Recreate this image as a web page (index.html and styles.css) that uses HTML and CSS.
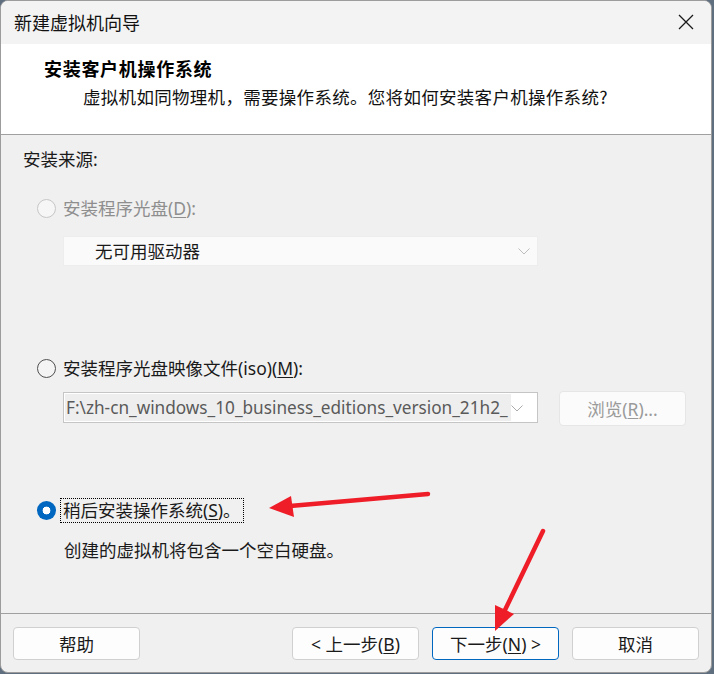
FILE: index.html
```html
<!DOCTYPE html>
<html lang="zh-CN">
<head>
<meta charset="utf-8">
<title>新建虚拟机向导</title>
<link rel="stylesheet" href="styles.css">
</head>
<body>
<div class="window">
  <div class="titlebar">
    <span class="title">新建虚拟机向导</span>
    <svg class="close" width="16" height="16" viewBox="0 0 16 16"><path d="M1 1 L15 15 M15 1 L1 15" stroke="#1a1a1a" stroke-width="1.3" fill="none"/></svg>
  </div>
  <div class="header">
    <div class="h-title">安装客户机操作系统</div>
    <div class="h-sub">虚拟机如同物理机，需要操作系统。您将如何安装客户机操作系统?</div>
  </div>
  <div class="main">
    <div class="src-label">安装来源:</div>

    <div class="radio-row r1 disabled">
      <span class="radio"></span>
      <span class="rlabel">安装程序光盘(<u>D</u>):</span>
    </div>
    <div class="select disabled-select">
      <span class="sel-text">无可用驱动器</span>
      <svg class="chev" width="12" height="7" viewBox="0 0 12 7"><polyline points="0.5,0.5 6,6 11.5,0.5" fill="none" stroke="#bdbdbd" stroke-width="1"/></svg>
    </div>

    <div class="radio-row r2">
      <span class="radio"></span>
      <span class="rlabel">安装程序光盘映像文件(iso)(<u>M</u>):</span>
    </div>
    <div class="iso-row">
      <div class="select combo">
        <span class="combo-text">F:\zh-cn_windows_10_business_editions_version_21h2_</span>
        <svg class="chev" width="12" height="7" viewBox="0 0 12 7"><polyline points="0.5,0.5 6,6 11.5,0.5" fill="none" stroke="#ababab" stroke-width="1"/></svg>
      </div>
      <div class="browse">浏览(<u>R</u>)...</div>
    </div>

    <div class="radio-row r3">
      <span class="radio checked"></span>
      <span class="rlabel focus">稍后安装操作系统(<u>S</u>)。</span>
    </div>
    <div class="desc">创建的虚拟机将包含一个空白硬盘。</div>
  </div>
  <div class="footer">
    <div class="btn">帮助</div>
    <div class="spacer"></div>
    <div class="btn">&lt; 上一步(<u>B</u>)</div>
    <div class="btn primary">下一步(<u>N</u>) &gt;</div>
    <div class="btn">取消</div>
  </div>
</div>
<svg class="arrows" width="714" height="674" viewBox="0 0 714 674">
  <g stroke="#ee1d27" stroke-width="4.5" stroke-linecap="round" fill="none">
    <line x1="428" y1="494" x2="290" y2="506"/>
    <line x1="543" y1="531" x2="505" y2="610"/>
  </g>
  <g fill="#ee1d27">
    <polygon points="269,508 294,517 291,496"/>
    <polygon points="495,631 514,614 495,605"/>
  </g>
</svg>
</body>
</html>
```

FILE: styles.css
```css
html, body {
  margin: 0;
  padding: 0;
  width: 714px;
  height: 674px;
  background: #5f6f80;
  overflow: hidden;
}
body {
  position: relative;
  font-family: "Noto Sans", "Noto Sans CJK SC", sans-serif;
  color: #1a1a1a;
}
.window {
  width: 712px;
  height: 673px;
  box-sizing: border-box;
  border: 1px solid #9c9c9c;
  border-radius: 8px;
  overflow: hidden;
  background: #f0f0f0;
  display: flex;
  flex-direction: column;
}
.titlebar {
  height: 43px;
  flex: none;
  background: #f3f3f3;
  display: flex;
  align-items: center;
  padding: 0 0 0 13px;
}
.title {
  font-family: "Noto Sans CJK SC", sans-serif;
  font-size: 18px;
  line-height: 24px;
  color: #111;
  flex: 1;
  margin-top: -1px;
}
.close {
  margin-right: 17px;
  margin-top: -1px;
}
.header {
  height: 90px;
  flex: none;
  background: #ffffff;
  border-bottom: 1px solid #a0a0a0;
  box-sizing: content-box;
}
.h-title {
  font-family: "Noto Sans CJK SC", sans-serif;
  font-weight: 700;
  font-size: 18px;
  letter-spacing: 0.7px;
  line-height: 24px;
  color: #000;
  margin: 12px 0 0 43px;
}
.h-sub {
  font-family: "Noto Sans CJK SC", sans-serif;
  font-size: 17.5px;
  line-height: 24px;
  color: #111;
  margin: 5px 0 0 82px;
  letter-spacing: 0.3px;
}
.main {
  flex: 1;
  padding: 12px 0 0 22px;
  font-size: 17.5px;
  line-height: 24px;
}
.src-label {
  height: 24px;
  color: #1a1a1a;
}
.radio-row {
  display: flex;
  align-items: center;
  height: 24px;
  padding-left: 14px;
  gap: 7px;
}
.r1 { margin-top: 25px; }
.r2 { margin-top: 90px; }
.r3 { margin-top: 72px; }
.radio {
  width: 17px;
  height: 17px;
  border-radius: 50%;
  border: 1px solid #4f4f4f;
  background: #f4f4f4;
  flex: none;
}
.disabled .radio {
  border-color: #c6c6c6;
  background: #f6f6f6;
}
.disabled .rlabel {
  color: #8e8e8e;
}
.radio.checked {
  width: 19px;
  height: 19px;
  border: none;
  background: radial-gradient(circle, #ffffff 0 3.6px, #0067c0 4.2px);
}
.rlabel.focus {
  border: 1px dotted #000;
  padding: 0 2px;
  margin-left: -3px;
  line-height: 23px;
}
.select {
  margin-left: 40px;
  width: 475px;
  box-sizing: border-box;
  display: flex;
  align-items: center;
  position: relative;
}
.disabled-select {
  height: 30px;
  margin-top: 16px;
  background: #fafafa;
  border: 1px solid #ededed;
  padding-left: 31px;
}
.sel-text {
  flex: 1;
  color: #1a1a1a;
}
.chev {
  margin-right: 7px;
  flex: none;
}
.iso-row {
  display: flex;
  align-items: flex-start;
  margin-top: 11px;
  gap: 21px;
}
.combo {
  height: 31px;
  margin-top: 1px;
  background: #ffffff;
  border: 1px solid #c5c5c5;
  padding: 1px 0 1px 1px;
}
.combo-text {
  flex: 1;
  min-width: 0;
  height: 100%;
  margin-right: 26px;
  background: #eeeeee;
  overflow: hidden;
  white-space: nowrap;
  font-family: "Noto Sans", sans-serif;
  font-size: 17.2px;
  line-height: 27px;
  padding-left: 1px;
  color: #5a5a5a;
}
.combo .chev {
  position: absolute;
  right: 7px;
  top: 12px;
}
.browse {
  width: 127px;
  height: 35px;
  box-sizing: border-box;
  background: #fbfbfb;
  border: 1px solid #e6e6e6;
  border-radius: 4px;
  display: flex;
  align-items: center;
  justify-content: center;
  color: #9a9a9a;
}
.desc {
  margin-top: 16px;
  margin-left: 41px;
  height: 24px;
}
.footer {
  flex: none;
  height: 59px;
  box-sizing: border-box;
  border-top: 1px solid #a0a0a0;
  display: flex;
  align-items: flex-start;
  padding: 13px 12px 0 12px;
  gap: 13px;
}
.spacer { flex: 1; }
.btn {
  width: 127px;
  height: 33px;
  box-sizing: border-box;
  background: #fdfdfd;
  border: 1px solid #d0d0d0;
  border-radius: 4px;
  display: flex;
  align-items: center;
  justify-content: center;
  font-size: 17.5px;
  color: #1a1a1a;
}
.btn.primary {
  border-color: #0067c0;
}
u {
  text-decoration-thickness: 1px;
  text-underline-offset: 2px;
}
.arrows {
  position: absolute;
  left: 0;
  top: 0;
  pointer-events: none;
}
```
